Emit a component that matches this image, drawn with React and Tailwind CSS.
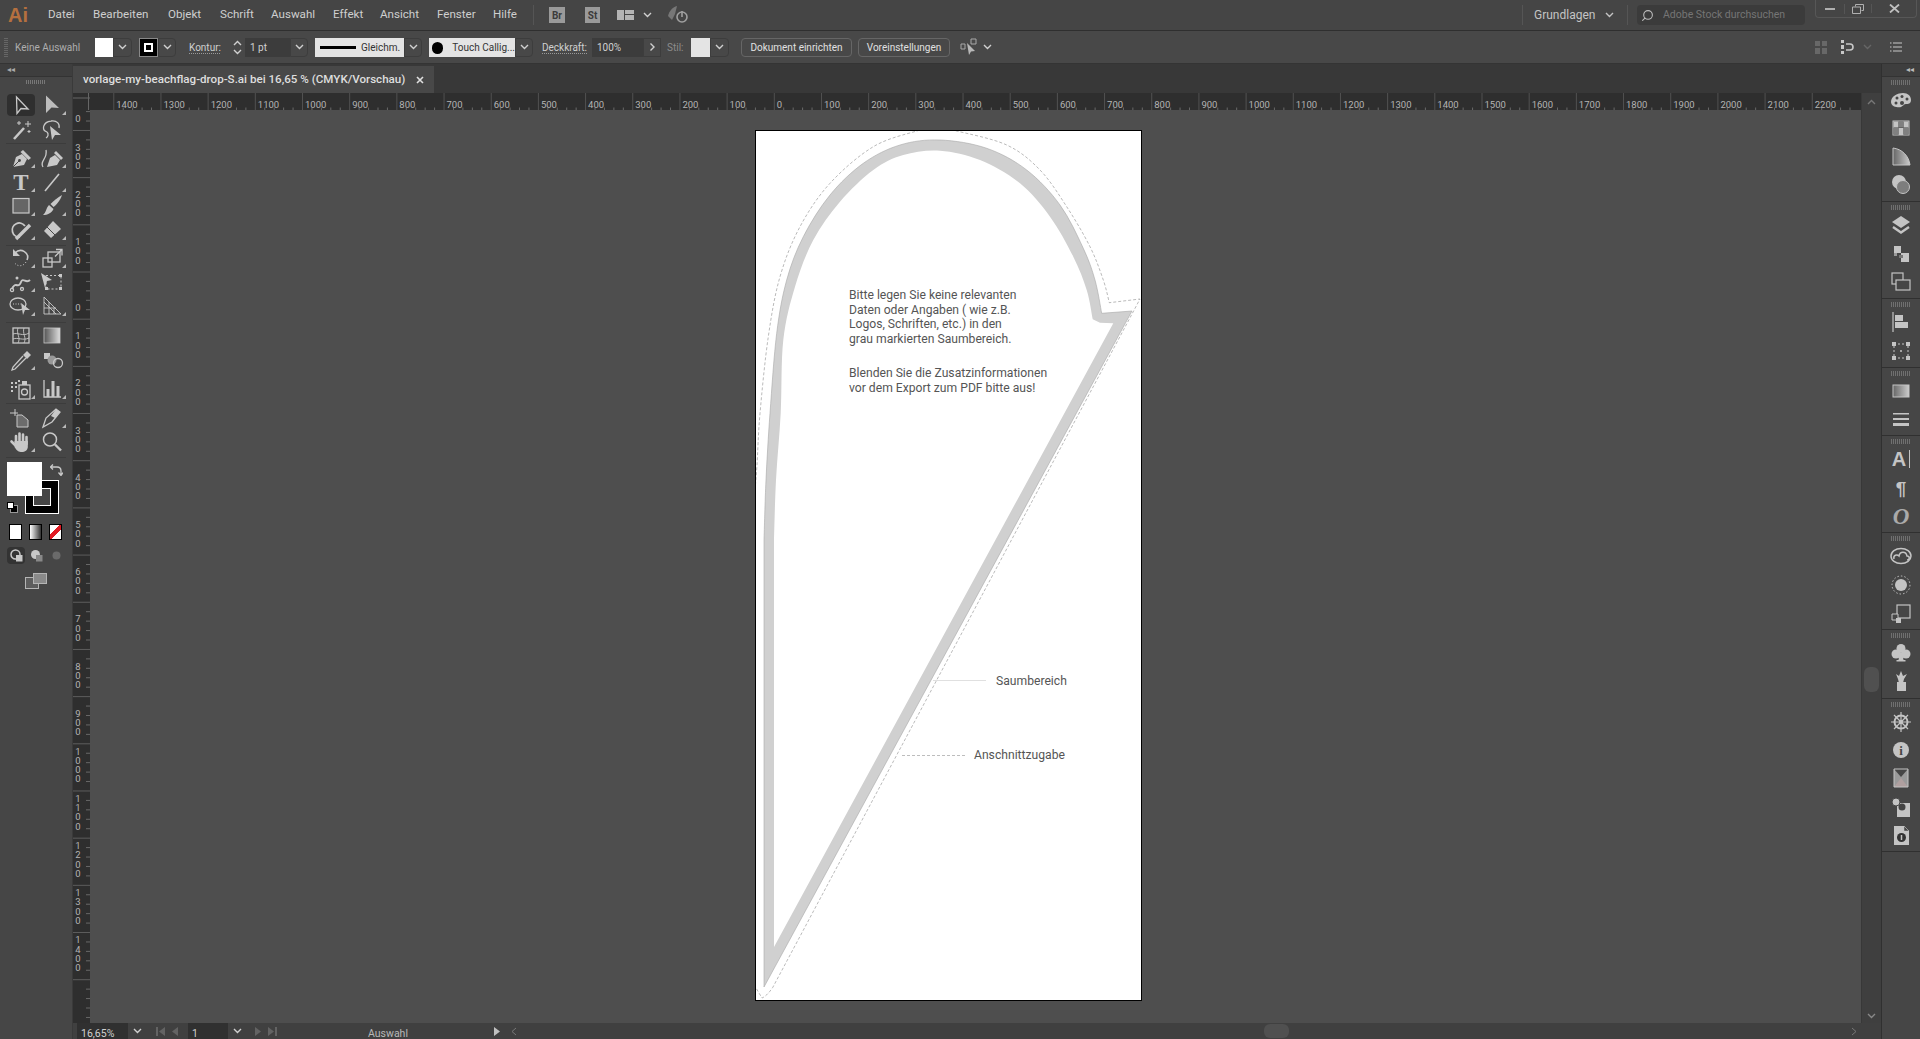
import React from "react";
import { Search } from "lucide-react";

const C = "#c8c8c8";

function smooth(pts) {
  let d = "";
  for (let i = 0; i < pts.length - 1; i++) {
    const p0 = pts[Math.max(i - 1, 0)];
    const p1 = pts[i];
    const p2 = pts[i + 1];
    const p3 = pts[Math.min(i + 2, pts.length - 1)];
    d += ` C${p1[0] + (p2[0] - p0[0]) / 6} ${p1[1] + (p2[1] - p0[1]) / 6} ${p2[0] - (p3[0] - p1[0]) / 6} ${p2[1] - (p3[1] - p1[1]) / 6} ${p2[0]} ${p2[1]}`;
  }
  return d;
}

const OUTER = [[1101.7,313.3],[1095,280],[1083.3,248.3],[1060,205],[1026.7,170],[986.7,148.3],[940,140],[900,145],[863.3,163.3],[830,195],[803.3,236.7],[786.7,280],[776.7,333.3],[770,413.3],[766,480],[764,540]];
const INNER = [[1092.7,319.3],[1086.7,290],[1073.3,256.7],[1050,216.7],[1020,183.3],[980,160],[940,150.7],[903.3,155],[873.3,170],[840,201.7],[813.3,240],[795,286.7],[783.3,340],[780.7,413.3],[776,480],[774,540]];
const CUT = [[755,490],[757,465],[760,413.3],[768.3,336.7],[780,276.7],[800,226.7],[830,183.3],[873.3,146.7],[916.7,131],[936,127],[956.7,131],[1006.7,145],[1040,170],[1066.7,206.7],[1090,246.7],[1103.3,280],[1109.3,302.7]];

function Flag() {
  const outer = `M764 987 L1132 311 L1101.7 313.3${smooth(OUTER)} Z`;
  const inner = `M774 947 L1113.3 323.3 L1100 322.7 L1092.7 319.3${smooth(INNER)} Z`;
  const cut = `M${CUT[0][0]} ${CUT[0][1]}${smooth(CUT)} L1140 299 L773 987 Q767 996 762 998 L756 988`;
  return (
    <svg className="absolute inset-0" width="385" height="869" viewBox="756 131 385 869">
      <path d={`${outer} ${inner}`} fill="#d0d0d0" fillRule="evenodd" />
      <path d={outer} fill="none" stroke="#a8a8a8" strokeWidth="0.6" />
      <path d={cut} fill="none" stroke="#8c8c8c" strokeWidth="0.6" strokeDasharray="3 2" />
      <path d="M933 680.5H986" stroke="#d8d8d8" strokeWidth="0.8" />
      <path d="M902 755.5H965" stroke="#a0a0a0" strokeWidth="0.7" strokeDasharray="3 2" />
    </svg>
  );
}

function Chev({ c = "#d0d0d0" }) {
  return (
    <svg width="9" height="6" viewBox="0 0 9 6">
      <path d="M1 1l3.5 3.5L8 1" fill="none" stroke={c} strokeWidth="1.4" />
    </svg>
  );
}

function Dd({ w = "w-[18px]" }) {
  return (
    <div className={`${w} h-[19px] flex items-center justify-center border border-[#3d3d3d] rounded-r-sm`}>
      <Chev />
    </div>
  );
}

function MenuBar() {
  return (
    <div className="h-[31px] shrink-0 bg-[#454545] border-b border-[#2f2f2f] flex items-center text-[11.6px] text-[#cfcfcf]">
      <div className="w-[48px] pl-[8px] text-[20px] leading-none font-bold text-[#b5703f] font-['Liberation_Sans',sans-serif]">Ai</div>
      <div className="w-[45px]">Datei</div>
      <div className="w-[75px]">Bearbeiten</div>
      <div className="w-[52px]">Objekt</div>
      <div className="w-[51px]">Schrift</div>
      <div className="w-[62px]">Auswahl</div>
      <div className="w-[47px]">Effekt</div>
      <div className="w-[57px]">Ansicht</div>
      <div className="w-[56px]">Fenster</div>
      <div className="w-[40px]">Hilfe</div>
      <div className="w-px h-[20px] bg-[#555]" />
      <div className="ml-[15px] w-[16px] h-[16px] bg-[#9a9a9a] text-[#3c3c3c] text-[10px] font-bold flex items-center justify-center">Br</div>
      <div className="ml-[20px] w-[15px] h-[16px] bg-[#9a9a9a] text-[#3c3c3c] text-[10px] font-bold flex items-center justify-center">St</div>
      <svg className="ml-[17px]" width="17" height="10" viewBox="0 0 17 10"><path d="M0 0h7v10H0zM8 0h9v4H8zM8 5h9v5H8z" fill="#b4b4b4" /></svg>
      <div className="ml-[9px]"><Chev /></div>
      <svg className="ml-[15px]" width="23" height="18" viewBox="0 0 23 18">
        <path d="M1 10C2 5 6 1 10 0L8 8 5 14z" fill="#777" />
        <circle cx="15" cy="11" r="5" fill="none" stroke="#a0a0a0" strokeWidth="1.6" />
        <path d="M15 5v6" stroke="#a0a0a0" strokeWidth="1.6" />
      </svg>
      <div className="flex-1" />
      <div className="w-px h-[20px] bg-[#555]" />
      <div className="w-[82px] pl-[11px] text-[12px] text-[#c4c4c4]">Grundlagen</div>
      <Chev c="#c4c4c4" />
      <div className="ml-[13px] w-px h-[20px] bg-[#555]" />
      <div className="ml-[9px] w-[168px] h-[20px] rounded-sm bg-[#3b3b3b] flex items-center pl-[4px] text-[10.5px] text-[#757575]">
        <Search size={13} color="#bdbdbd" className="-scale-x-100" />
        <span className="ml-[9px]">Adobe Stock durchsuchen</span>
      </div>
      <div className="ml-[10px] w-[102px] h-[18px] self-start border border-t-0 border-[#575757] rounded-b-sm flex items-center text-[#bbb]">
        <div className="w-[28px] flex justify-center"><div className="w-[10px] h-[2px] bg-[#b0b0b0]" /></div>
        <div className="w-[27px] flex justify-center border-l border-[#555]">
          <svg width="12" height="10" viewBox="0 0 12 10"><path d="M3.5 2.5V.5h8v6h-2M.5 3h8v6.5h-8z" fill="none" stroke="#b0b0b0" /></svg>
        </div>
        <div className="flex-1 flex justify-center border-l border-[#555]">
          <svg width="11" height="9" viewBox="0 0 11 9"><path d="M1 .5l9 8M10 .5l-9 8" stroke="#c0c0c0" strokeWidth="1.8" /></svg>
        </div>
      </div>
      <div className="w-[3px]" />
    </div>
  );
}

function ControlBar() {
  const under = "pt-[1px] underline decoration-dotted decoration-[#999] underline-offset-2";
  return (
    <div className="h-[33px] shrink-0 bg-[#484848] border-b border-[#343434] flex items-center text-[10px] text-[#d0d0d0]">
      <div className="ml-[4px] w-[4px] h-[20px] bg-[repeating-linear-gradient(0deg,#666_0_1px,transparent_1px_2px)]" />
      <div className="ml-[7px] w-[80px] pt-[1px] text-[#aeaeae]">Keine Auswahl</div>
      <div className="w-[18px] h-[19px] bg-white" />
      <Dd w="w-[19px]" />
      <div className="ml-[7px] w-[19px] h-[19px] bg-black border border-[#888] flex items-center justify-center">
        <div className="w-[9px] h-[9px] border-2 border-white" />
      </div>
      <Dd />
      <div className={`ml-[13px] w-[41px] ${under}`}>Kontur:</div>
      <div className="w-[15px] h-[19px] flex flex-col items-center justify-center gap-[3px]">
        <div className="rotate-180"><Chev /></div>
        <Chev />
      </div>
      <div className="w-[45px] h-[19px] bg-[#3c3c3c] pl-[5px] pt-[1px] flex items-center">1 pt</div>
      <Dd />
      <div className="ml-[7px] w-[89px] h-[19px] pt-[1px] bg-[#e4e4e4] flex items-center text-[#333] pl-[5px]">
        <div className="w-[36px] h-[3px] bg-black" />
        <span className="ml-[5px]">Gleichm.</span>
      </div>
      <Dd />
      <div className="ml-[7px] w-[86px] h-[19px] pt-[1px] bg-[#e4e4e4] flex items-center text-[#333] pl-[3px] whitespace-nowrap overflow-hidden">
        <div className="w-[12px] h-[12px] rounded-full bg-black" />
        <span className="ml-[9px]">Touch Callig...</span>
      </div>
      <Dd />
      <div className={`ml-[9px] w-[50px] ${under}`}>Deckkraft:</div>
      <div className="w-[51px] h-[19px] bg-[#3c3c3c] pl-[5px] pt-[1px] flex items-center">100%</div>
      <div className="w-[18px] h-[19px] border border-[#3d3d3d] flex items-center justify-center">
        <div className="-rotate-90"><Chev /></div>
      </div>
      <div className="ml-[6px] w-[24px] pt-[1px] text-[#8c8c8c]">Stil:</div>
      <div className="w-[19px] h-[19px] bg-[#e4e4e4]" />
      <Dd w="w-[19px]" />
      <div className="ml-[12px] w-[111px] h-[19px] pt-[1px] border border-[#666] rounded-sm flex items-center justify-center text-[#e0e0e0]">Dokument einrichten</div>
      <div className="ml-[6px] w-[92px] h-[19px] pt-[1px] border border-[#666] rounded-sm flex items-center justify-center text-[#e0e0e0]">Voreinstellungen</div>
      <svg className="ml-[10px]" width="18" height="18" viewBox="0 0 18 18">
        <path d="M11 1h5v5h-5zM1 6h4v5H1z" fill="none" stroke="#a8a8a8" />
        <path d="M7 5l8 8-4 .5L9 17z" fill="#b8b8b8" />
      </svg>
      <div className="ml-[5px]"><Chev /></div>
      <div className="flex-1" />
      <svg width="12" height="13" viewBox="0 0 12 13"><path d="M0 0h5v5H0zM7 0h5v5H7zM0 7h5v6H0zM7 7h5v6H7z" fill="#686868" /></svg>
      <svg className="ml-[14px]" width="14" height="14" viewBox="0 0 14 14">
        <path d="M0 0h3v3H0zM0 5h3v4H0zM0 11h3v3H0z" fill="#c8c8c8" />
        <path d="M5 4h4a3 3 0 0 1 0 6H5" fill="none" stroke="#c8c8c8" strokeWidth="1.6" />
      </svg>
      <div className="ml-[8px]"><Chev c="#666" /></div>
      <svg className="ml-[18px]" width="12" height="10" viewBox="0 0 12 10"><path d="M3 1h9M3 5h9M3 9h9M0 1h1.5M0 5h1.5M0 9h1.5" stroke="#c8c8c8" strokeWidth="1.2" /></svg>
      <div className="w-[18px]" />
    </div>
  );
}

function T({ tri, children, className = "" }) {
  return (
    <div className={`w-[31px] h-[24px] flex items-center justify-center ${className}`}>
      <svg width="28" height="24" viewBox="0 0 28 24" className="overflow-visible">
        {children}
        {tri && <polygon points="28,22 28,18 24,22" fill="#b8b8b8" />}
      </svg>
    </div>
  );
}

function Tools() {
  const s = { fill: "none", stroke: C, strokeWidth: 1.3 };
  const sep = "border-b border-[#3c3c3c] mx-[6px]";
  const row = "flex h-[24px]";
  return (
    <div className="w-[73px] shrink-0 bg-[#464646] border-r border-[#3a3a3a] flex flex-col">
      <div className="h-[13px] bg-[#3e3e3e] border-b border-[#333] pl-[7px] text-[8px] leading-[11px] text-[#aaa]">◂◂</div>
      <div className="h-[11px] flex justify-center pt-[3px]">
        <div className="w-[20px] h-[4px] bg-[repeating-linear-gradient(90deg,#777_0_1px,transparent_1px_2px)]" />
      </div>
      <div className="pl-[5px] pt-[5px]">
        <div className="flex h-[25px]">
          <div className="w-[31px] h-[24px] flex justify-center items-center">
            <div className="w-[28px] h-[22px] bg-[#2f2f2f] rounded-sm flex items-center justify-center">
              <svg width="28" height="22" viewBox="0 0 28 22"><path d="M9.5 3L21 15l-7-.5-4 5z" {...s} /></svg>
            </div>
          </div>
          <T tri><path d="M8 2.5L21 15l-7.5-.5L8 20z" fill="#bdbdbd" /></T>
        </div>
        <div className="flex h-[25px]">
          <T>
            <path d="M7 21l10-11" stroke={C} strokeWidth="2.6" />
            <path d="M21 3v6M18 6h6M12 3v4M10 5h4M22 12v3M20.5 13.5h3" stroke={C} />
          </T>
          <T>
            <path d="M9 14C3 12 5 4 13 3c6-1 9 3 8 7" {...s} />
            <path d="M9 14c2 2 1 5-1 6" {...s} />
            <path d="M12 8l11 9h-6l-3 5z" fill="#c8c8c8" />
          </T>
        </div>
      </div>
      <div className={sep} />
      <div className="pl-[5px] pt-[2px] pb-[3px]">
        <div className={row}>
          <T tri><path d="M6 21l3-10 6-3 5 5-3 6z" fill={C} /><path d="M16 4l8 8-2.5 2-8-8z" fill={C} /><path d="M6 21l6-6" stroke="#464646" /><circle cx="12.5" cy="14.5" r="1.4" fill="#464646" /></T>
          <T tri><path d="M9 21l3-9 5-3 5 5-3 5z" fill={C} /><path d="M18 5l7 7-2 2-7-7z" fill={C} /><path d="M5 21C1 15 10 13 8 4" {...s} /></T>
        </div>
        <div className={row}>
          <T tri><text x="14" y="20" textAnchor="middle" fill={C} fontSize="23" fontWeight="700" fontFamily="'Liberation Serif',serif">T</text></T>
          <T tri><path d="M7 21L21 4" stroke={C} strokeWidth="1.6" /></T>
        </div>
        <div className={row}>
          <T tri><rect x="6" y="4.5" width="16" height="14.5" fill="#666" stroke={C} strokeWidth="1.2" /></T>
          <T tri><path d="M24 1c-2 6-6 10-8.500 12L12.500 10C15.500 7 19 4 24 1z" fill={C} /><path d="M11 11l4.500 4c-2 4-6 6-10.500 6 3-2 3-7 6-10z" fill={C} /></T>
        </div>
        <div className={row}>
          <T tri><path d="M13 19A7 7 0 1 1 18 8" fill="none" stroke={C} strokeWidth="1.8" /><path d="M9 21L23 7" stroke={C} strokeWidth="3.4" /></T>
          <T tri><path d="M15 3l8 8-10 9-7-7z" fill={C} /><path d="M9 9l8 8" stroke="#464646" /></T>
        </div>
      </div>
      <div className={sep} />
      <div className="pl-[5px] pb-[4px]">
        <div className={row}>
          <T tri><path d="M8 7c6-6 15 0 12 7" fill="none" stroke={C} strokeWidth="1.6" /><path d="M6 3v7h7z" fill={C} /><path d="M19 16c-3 5-9 5-12 0" fill="none" stroke={C} strokeDasharray="1 2" /></T>
          <T tri><rect x="5" y="12" width="9" height="9" {...s} /><rect x="10" y="6" width="12" height="10" {...s} /><path d="M18 3.500h6v6M24 3.500l-7 7" {...s} /></T>
        </div>
        <div className={row}>
          <T tri><path d="M5 19c4-9 6 1 9-7 2-5 5 2 9-2" fill="none" stroke={C} strokeWidth="2" /><circle cx="5" cy="20" r="1.600" {...s} /><circle cx="10" cy="8" r="1.500" fill={C} /><circle cx="15" cy="19" r="1.500" {...s} /></T>
          <T><rect x="8" y="5.500" width="15" height="13.500" fill="none" stroke={C} strokeDasharray="2 2" /><path d="M3 3l11 7-5 1-2 7z" fill={C} /><path d="M21 4h3v3h-3zM21 17h3v3h-3zM7 17h3v3H7z" fill={C} /></T>
        </div>
        <div className={row}>
          <T tri><ellipse cx="11" cy="10" rx="8" ry="6" {...s} /><path d="M6 10h8" stroke={C} strokeDasharray="1 1.500" /><path d="M14 9l9 7h-5l-2 5z" fill={C} /></T>
          <T tri><path d="M6 3v17h17M6 3l17 17M6 8l12 12M11 8v12M6 14h12M16 14v6" fill="none" stroke={C} strokeWidth="0.9" /></T>
        </div>
      </div>
      <div className={sep} />
      <div className="pl-[5px] pt-[1px] pb-[2px]">
        <div className={row}>
          <T><rect x="6" y="4" width="16" height="15" {...s} /><path d="M6 10c5-2 10 3 16-1M6 15c5-2 10 2 16-1M11 4c-2 5 3 10 0 15M17 4c-2 5 3 10 0 15" fill="none" stroke={C} strokeWidth="0.9" /></T>
          <T>
            <defs><linearGradient id="tg" x1="0" x2="1"><stop offset="0" stopColor="#555" /><stop offset="1" stopColor="#ddd" /></linearGradient></defs>
            <rect x="6" y="4" width="16" height="15" fill="url(#tg)" stroke={C} strokeWidth="0.8" />
          </T>
        </div>
        <div className={row}>
          <T tri><path d="M20 3l4 4-4 4-4-4z" fill={C} /><path d="M16 8L6 19l-1 3 3-1L19 10" {...s} /></T>
          <T><rect x="6" y="5" width="6" height="6" fill={C} /><circle cx="14" cy="12" r="4.500" fill="#999" /><circle cx="20" cy="15" r="4.500" {...s} /></T>
        </div>
        <div className={`${row} mt-[5px]`}>
          <T tri><path d="M4 5h2v2H4zM8 5h2v2H8zM4 9h2v2H4zM8 9h2v2H8zM11 3h2v2h-2zM4 13h2v2H4z" fill={C} /><rect x="12" y="8" width="11" height="14" {...s} /><circle cx="17.500" cy="15" r="3" {...s} /><path d="M15 4h5v4h-5z" fill={C} /></T>
          <T tri><path d="M6 3v17h17" {...s} /><path d="M8.500 12h3v8h-3zM13.500 4h3v16h-3zM18.500 9h3v11h-3z" fill={C} /></T>
        </div>
      </div>
      <div className={sep} />
      <div className="pl-[5px] pt-[2px] pb-[3px]">
        <div className={row}>
          <T><path d="M3 7h8M8 3v7" stroke={C} /><path d="M10 9h5l6 5v7H10z" fill="#6c6c6c" stroke={C} /></T>
          <T tri><path d="M5 21l3-9L18 3l4 3-8 10z" {...s} /><path d="M18 3l4 3-5 6-4-2z" fill={C} /></T>
        </div>
        <div className={row}>
          <T tri>
            <path d="M9 14V6M12.500 13V3.500M16 13V4.500M19.500 14V7" stroke={C} strokeWidth="2.600" strokeLinecap="round" fill="none" />
            <path d="M8 15L4.500 11.500" stroke={C} strokeWidth="2.600" strokeLinecap="round" />
            <path d="M7.500 11h13.300v6c0 3-3 5-6 5s-5-1-7.300-5z" fill={C} />
          </T>
          <T><circle cx="12" cy="9.500" r="6.500" fill="none" stroke={C} strokeWidth="1.500" /><path d="M17 14.500l6 6" stroke={C} strokeWidth="2.400" /></T>
        </div>
      </div>
      <div className={sep} />
      <div className="relative h-[60px]">
        <div className="absolute left-[25px] top-[22px] w-[34px] h-[34px] bg-black border border-white flex items-center justify-center">
          <div className="w-[18px] h-[18px] bg-[#464646] border border-white" />
        </div>
        <div className="absolute left-[7px] top-[4px] w-[35px] h-[34px] bg-white" />
        <svg className="absolute left-[50px] top-[5px]" width="13" height="13" viewBox="0 0 13 13"><path d="M1 4h6q4 0 4 4v4M3 1.500L.5 4 3 6.500M8.500 9.500l2.500 3 2-3" fill="none" stroke={C} strokeWidth="1.300" /></svg>
        <div className="absolute left-[10px] top-[47px] w-[8px] h-[8px] bg-black border border-[#999]" />
        <div className="absolute left-[7px] top-[44px] w-[7px] h-[7px] bg-white border border-black" />
      </div>
      <div className="mt-[6px] flex pl-[9px] gap-[7px]">
        <div className="w-[13px] h-[16px] bg-white border border-black" />
        <div className="w-[13px] h-[16px] border border-black bg-[linear-gradient(90deg,#fff,#333)]" />
        <div className="w-[13px] h-[16px] border border-black bg-[linear-gradient(135deg,#fff_38%,#e01b24_38%_62%,#fff_62%)]" />
      </div>
      <div className="mt-[7px] flex pl-[7px] gap-[2px] h-[17px] items-center">
        <div className="w-[18px] h-[17px] rounded-sm bg-[#333] flex items-center justify-center">
          <svg width="13" height="13" viewBox="0 0 13 13"><circle cx="5.500" cy="5.500" r="4.500" fill="none" stroke={C} strokeWidth="1.500" /><rect x="6" y="6" width="6.500" height="6.500" fill={C} /></svg>
        </div>
        <div className="w-[18px] flex items-center justify-center">
          <svg width="13" height="13" viewBox="0 0 13 13"><circle cx="5.500" cy="5.500" r="4.500" fill={C} /><rect x="6" y="6" width="6.500" height="6.500" fill="#888" /></svg>
        </div>
        <div className="w-[18px] flex items-center justify-center">
          <svg width="11" height="11" viewBox="0 0 11 11"><circle cx="5.500" cy="5.500" r="4" fill="#6a6a6a" /></svg>
        </div>
      </div>
      <div className="mt-[9px] pl-[25px]">
        <svg width="22" height="16" viewBox="0 0 22 16"><rect x="0.500" y="4.500" width="13" height="11" fill="#5d5d5d" stroke="#b5b5b5" /><rect x="8.500" y="0.500" width="13" height="10" fill="#8a8a8a" stroke="#b5b5b5" /></svg>
      </div>
    </div>
  );
}

function HRuler() {
  const els = [];
  const x = (n) => 701.3 + (47.18 * n) / 100;
  for (let n = -1400; n <= 2200; n += 100) {
    const px = x(n);
    els.push(<path key={`m${n}`} d={`M${px} 0V17`} stroke="#5a5a5a" strokeWidth="0.8" />);
    els.push(<text key={`t${n}`} x={px + 2.5} y="14.6" fill="#b4b4b4" fontSize="9.5" fontFamily="Roboto,sans-serif">{Math.abs(n)}</text>);
    for (let k = 1; k < 5; k++) {
      els.push(<path key={`s${n}${k}`} d={`M${px + (k * 47.18) / 5} 14.500V17`} stroke="#777" strokeWidth="0.8" />);
    }
  }
  return (
    <svg width="1788" height="17" viewBox="0 0 1788 17" className="block bg-[#2e2e2e]">
      {els}
      <rect x="0" y="0" width="17" height="17" fill="#2e2e2e" />
      <path d="M0 5H17M15.500 0V17" stroke="#666" />
    </svg>
  );
}

function VRuler() {
  const els = [];
  const y = (n) => 162 + (47.18 * n) / 100;
  for (let n = -400; n <= 1500; n += 100) {
    const py = y(n);
    els.push(<path key={`m${n}`} d={`M0 ${py}H17`} stroke="#6a6a6a" strokeWidth="0.8" />);
    for (let k = 1; k < 5; k++) {
      els.push(<path key={`s${n}${k}`} d={`M13 ${py + (k * 47.18) / 5}H17`} stroke="#777" strokeWidth="0.8" />);
    }
    if (n === 1500) continue;
    const digits = String(Math.abs(n)).split("");
    digits.forEach((d, i) => {
      const cy = py + 47.18 - 12 - (digits.length - 1 - i) * 9.3;
      if (cy < 5) return;
      els.push(<text key={`d${n}${i}`} x="5" y={cy + 3.500} textAnchor="middle" fill="#b4b4b4" fontSize="9.5" fontFamily="Roboto,sans-serif">{d}</text>);
    });
  }
  return (
    <svg width="17" height="913" viewBox="0 0 17 913" className="block shrink-0 bg-[#2e2e2e]">
      {els}
    </svg>
  );
}

function Artboard() {
  const txt = "absolute text-[12.15px] leading-[14.6px] text-[#555] whitespace-nowrap";
  return (
    <div className="relative ml-[665px] mt-[20px] w-[387px] h-[871px] bg-white border border-black">
      <Flag />
      <div className={`${txt} left-[93px] top-[157px]`}>
        <div>Bitte legen Sie keine relevanten</div>
        <div>Daten oder Angaben ( wie z.B.</div>
        <div>Logos, Schriften, etc.) in den</div>
        <div>grau markierten Saumbereich.</div>
      </div>
      <div className={`${txt} left-[93px] top-[235px]`}>
        <div>Blenden Sie die Zusatzinformationen</div>
        <div>vor dem Export zum PDF bitte aus!</div>
      </div>
      <div className={`${txt} left-[240px] top-[543px]`}>Saumbereich</div>
      <div className={`${txt} left-[218px] top-[617px]`}>Anschnittzugabe</div>
    </div>
  );
}

function Center() {
  return (
    <div className="w-[1808px] shrink-0 flex flex-col">
      <div className="h-[29px] shrink-0 bg-[#383838] flex items-end">
        <div className="w-[361px] h-[27px] bg-[#484848] flex items-center pl-[10px] text-[11.6px] font-medium text-[#dedede] whitespace-nowrap">
          <span className="w-[333px]">vorlage-my-beachflag-drop-S.ai bei 16,65 % (CMYK/Vorschau)</span>
          <svg width="8" height="8" viewBox="0 0 8 8"><path d="M1 1l6 6M7 1L1 7" stroke="#e0e0e0" strokeWidth="1.600" /></svg>
        </div>
      </div>
      <div className="h-[930px] flex">
        <div className="w-[1788px] flex flex-col">
          <HRuler />
          <div className="h-[913px] flex">
            <VRuler />
            <div className="flex-1 bg-[#4e4e4e] overflow-hidden"><Artboard /></div>
          </div>
        </div>
        <div className="w-[20px] bg-[#3f3f3f] border-l border-[#383838] flex flex-col items-center relative">
          <div className="mt-[6px] rotate-180"><Chev c="#777" /></div>
          <div className="mt-[562px] w-[15px] h-[25px] rounded-md bg-[#505050]" />
          <div className="mt-auto mb-[4px]"><Chev c="#888" /></div>
        </div>
      </div>
      <div className="h-[16px] shrink-0 bg-[#404040] flex items-center text-[10.5px] text-[#cfcfcf] overflow-hidden">
        <div className="ml-[4px] w-[51px] h-[16px] bg-[#303030] pl-[4px] leading-[21px]">16,65%</div>
        <div className="w-[18px] flex justify-center"><Chev /></div>
        <div className="w-[42px] flex items-center justify-center gap-[7px]">
          <svg width="9" height="9" viewBox="0 0 9 9"><path d="M0 0h2v9H0zM9 0v9L3 4.500z" fill="#636363" /></svg>
          <svg width="6" height="9" viewBox="0 0 6 9"><path d="M6 0v9L0 4.500z" fill="#636363" /></svg>
        </div>
        <div className="w-[40px] h-[16px] bg-[#303030] pl-[4px] leading-[21px]">1</div>
        <div className="w-[18px] flex justify-center"><Chev /></div>
        <div className="w-[40px] flex items-center justify-center gap-[7px]">
          <svg width="6" height="9" viewBox="0 0 6 9"><path d="M0 0v9l6-4.500z" fill="#636363" /></svg>
          <svg width="9" height="9" viewBox="0 0 9 9"><path d="M9 0H7v9h2zM0 0v9l6-4.500z" fill="#636363" /></svg>
        </div>
        <div className="w-[204px] text-center leading-[21px] h-[16px] text-[#b8b8b8]">Auswahl</div>
        <svg className="ml-[4px]" width="6" height="9" viewBox="0 0 6 9"><path d="M0 0v9l6-4.500z" fill="#c0c0c0" /></svg>
        <svg className="ml-[11px]" width="6" height="9" viewBox="0 0 6 9"><path d="M5 1L1 4.500 5 8" fill="none" stroke="#777" /></svg>
        <div className="ml-[747px] w-[25px] h-[14px] rounded-md bg-[#505050]" />
        <svg className="ml-[562px]" width="6" height="9" viewBox="0 0 6 9"><path d="M1 1l4 3.500L1 8" fill="none" stroke="#777" /></svg>
      </div>
    </div>
  );
}

function D({ children }) {
  return (
    <div className="h-[28.3px] flex items-center justify-center">
      <svg width="24" height="24" viewBox="0 0 24 24">{children}</svg>
    </div>
  );
}

function DockSection({ children }) {
  return (
    <div className="border-b border-[#303030] pb-[2px] pt-[3px]">
      <div className="mx-auto w-[20px] h-[5px] mb-[1px] bg-[repeating-linear-gradient(90deg,#707070_0_1px,transparent_1px_2px)]" />
      {children}
    </div>
  );
}

function Dock() {
  const f = "#c4c4c4";
  const s = { fill: "none", stroke: f, strokeWidth: 1.200 };
  const bg = "#464646";
  return (
    <div className="flex-1 bg-[#464646] border-l border-[#303030] flex flex-col">
      <div className="h-[13px] bg-[#3e3e3e] border-b border-[#333] text-right pr-[6px] text-[8px] leading-[11px] text-[#bbb]">◂◂</div>
      <DockSection>
        <D><path d="M2 14c0-6 7-9 12-9s8 3 8 7-3 4-5 4-3 2-5 3-10 0-10-5z" fill={f} /><circle cx="8" cy="10" r="1.500" fill={bg} /><circle cx="13" cy="8.500" r="1.500" fill={bg} /><circle cx="18" cy="11" r="1.500" fill={bg} /><circle cx="7" cy="15" r="1.500" fill={bg} /><circle cx="13" cy="15" r="2" fill={bg} /></D>
        <D><rect x="4" y="5" width="16" height="14" fill="none" stroke={f} /><path d="M4.500 5.500h5v6h-5zM14.500 5.500h5v6h-5zM9.500 12h5v7h-5z" fill={f} /><path d="M9.500 5.500h5v6h-5zM4.500 12h5v7h-5zM14.500 12h5v7h-5z" fill="#808080" /></D>
        <D>
          <defs><linearGradient id="dg" x1="0" x2="1"><stop offset="0" stopColor="#666" /><stop offset="1" stopColor="#ccc" /></linearGradient></defs>
          <path d="M4 3c9 1 16 8 17 17H4z" fill="url(#dg)" stroke={f} />
        </D>
        <D><circle cx="10" cy="9" r="7" fill={f} /><circle cx="14" cy="14" r="6.500" fill="#7d7d7d" stroke={f} /></D>
      </DockSection>
      <DockSection>
        <D><path d="M12 3l9 6-9 6-9-6z" fill={f} /><path d="M4 14l8 5.500 8-5.500" fill="none" stroke={f} strokeWidth="2.400" /></D>
        <D><path d="M5 4h7v7H5zM12 11h8v9h-8z" fill={f} /><path d="M5 11h3v3H5z" fill="#999" /><path d="M10 13h4v3h-4z" fill="#777" /></D>
        <D><rect x="3" y="3" width="11" height="11" {...s} /><rect x="7" y="10" width="14" height="10" fill={bg} stroke={f} strokeWidth="1.200" /></D>
      </DockSection>
      <DockSection>
        <D><path d="M4 2v20" stroke={f} strokeWidth="1.200" /><path d="M6 5h8v6H6zM6 12h13v6H6z" fill={f} /></D>
        <D><rect x="5" y="5" width="14" height="14" fill="none" stroke={f} strokeDasharray="2 2" /><path d="M3 3h4v4H3zM17 3h4v4h-4zM3 17h4v4H3zM17 17h4v4h-4z" fill={f} /><circle cx="12" cy="12" r="1" fill={f} /></D>
      </DockSection>
      <DockSection>
        <D><rect x="4" y="6" width="16" height="12" fill="url(#dg)" stroke={f} /></D>
        <D><path d="M4 6h16v1.500H4zM4 11h16v2H4zM4 16h16v3H4z" fill={f} /></D>
      </DockSection>
      <DockSection>
        <D>
          <text x="10" y="19" textAnchor="middle" fontSize="20" fontWeight="700" fill={f} fontFamily="'Liberation Sans',sans-serif">A</text>
          <path d="M20.500 3v18" stroke={f} />
        </D>
        <D><text x="12" y="19" textAnchor="middle" fontSize="19" fontWeight="700" fill={f} fontFamily="'Liberation Sans',sans-serif">¶</text></D>
        <D><text x="12" y="20" textAnchor="middle" fontSize="23" fontWeight="700" fontStyle="italic" fill="#aaa" fontFamily="'Liberation Serif',serif">O</text></D>
      </DockSection>
      <DockSection>
        <D><ellipse cx="12" cy="12" rx="10" ry="7.500" fill="none" stroke={f} strokeWidth="1.500" /><path d="M5 15c-1-4 3-5 5-3 1-5 7-5 8 0 3 0 3 4 0 4" fill="none" stroke={f} strokeWidth="1.500" /></D>
        <D><circle cx="12" cy="12" r="6" fill={f} /><circle cx="12" cy="12" r="9" fill="none" stroke={f} strokeDasharray="1.500 2" /></D>
        <D><rect x="8" y="4" width="13" height="13" {...s} /><path d="M3 13h6v6H3z" fill={bg} stroke={f} /><path d="M7 17h5v5H7z" fill={f} /></D>
      </DockSection>
      <DockSection>
        <D><circle cx="12" cy="7.500" r="4.500" fill={f} /><circle cx="7" cy="13" r="4.500" fill={f} /><circle cx="17" cy="13" r="4.500" fill={f} /><path d="M10.500 12h3l1 7h2v1.500H7.500V19h2z" fill={f} /></D>
        <D><path d="M8 13h9v9H8z" fill={f} /><path d="M7 5l3 2 2-5 2 5 4-2-3 5-1 4h-4l-1-4z" fill={f} /></D>
      </DockSection>
      <DockSection>
        <D><circle cx="12" cy="12" r="6.500" fill="none" stroke={f} strokeWidth="2" /><circle cx="12" cy="12" r="2" fill={f} /><path d="M12 2v20M2 12h20M5 5l14 14M19 5L5 19" stroke={f} strokeWidth="1.200" /></D>
        <D><circle cx="12" cy="12" r="8" fill={f} /><text x="12" y="17" textAnchor="middle" fontSize="13" fontWeight="700" fill={bg} fontFamily="'Liberation Serif',serif">i</text></D>
        <D><rect x="5" y="3" width="14" height="18" fill="#9a9a9a" /><path d="M5 3h14L12 11z" fill={bg} /><path d="M5 21l7-9 7 9z" fill="#b0a0a0" /><path d="M5 3h14v18H5z" fill="none" stroke={f} /></D>
        <D><path d="M8 8h13v14H8z" fill={f} /><circle cx="7" cy="7" r="4" fill={f} stroke={bg} /><circle cx="13" cy="12" r="3.500" fill="#444" /></D>
        <D><path d="M5 3h10l5 5v14H5z" fill={f} /><path d="M15 3l5 5h-5z" fill={bg} stroke={f} strokeWidth="0.500" /><circle cx="12.500" cy="14.500" r="4.500" fill="#333" /><path d="M12.500 12v5" stroke={f} strokeWidth="1.500" /></D>
      </DockSection>
    </div>
  );
}

export default function App() {
  return (
    <div className="w-[1920px] h-[1039px] overflow-hidden flex flex-col bg-[#484848] font-['Roboto',sans-serif]">
      <MenuBar />
      <ControlBar />
      <div className="h-[975px] flex">
        <Tools />
        <Center />
        <Dock />
      </div>
    </div>
  );
}
